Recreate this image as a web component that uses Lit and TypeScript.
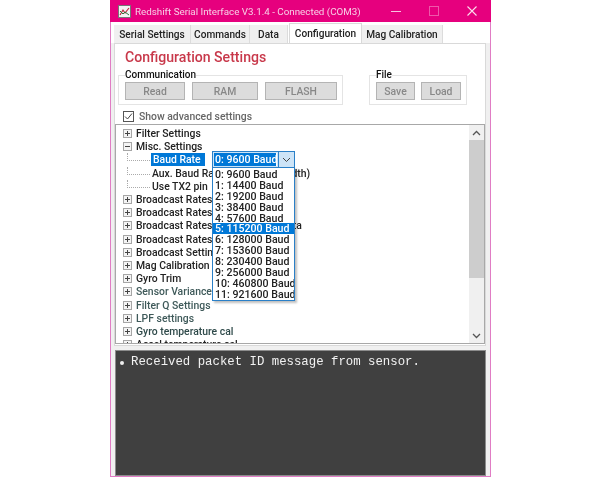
import { LitElement, html, css, svg } from "lit";
import { customElement } from "lit/decorators.js";

const options = ["0: 9600 Baud","1: 14400 Baud","2: 19200 Baud","3: 38400 Baud","4: 57600 Baud","5: 115200 Baud","6: 128000 Baud","7: 153600 Baud","8: 230400 Baud","9: 256000 Baud","10: 460800 Baud","11: 921600 Baud"];
const top1 = ["Filter Settings"];
const rest = [
  ["Broadcast Rates - Raw Data","#222"],["Broadcast Rates - Processed","#222"],["Broadcast Rates - Quaternions Data","#222"],["Broadcast Rates - Euler","#222"],
  ["Broadcast Settings","#222"],["Mag Calibration","#222"],["Gyro Trim","#222"],["Sensor Variances","#3f5a5a"],["Filter Q Settings","#3f5a5a"],["LPF settings","#3f5a5a"],["Gyro temperature cal","#2f4a4a"],["Accel temperature cal","#222"],
];

const expander = (minus = false) => svg`<svg class="exp" width="9" height="9" viewBox="0 0 9 9"><rect x=".5" y=".5" width="8" height="8" fill="#f4f4f4" stroke="#a6a6a6"/><path d="M2 4.5h5${minus ? "" : "M4.5 2v5"}" stroke="#444" fill="none"/></svg>`;

@customElement("app-root")
export class AppRoot extends LitElement {
  static styles = css`
    :host { display: block; width: 600px; height: 480px; background: #fff; overflow: hidden; font-family: Roboto, "Liberation Sans", sans-serif; font-size: 10.4px; color: #222; }
    .page { padding: 0 0 0 110px; height: 480px; box-sizing: border-box; filter: blur(0.35px); }
    .win { width: 381px; height: 477px; box-sizing: border-box; border: 1px solid #e07cc4; border-top: 0; background: #f0f0f0; display: flex; flex-direction: column; }
    .title { height: 22px; flex: none; margin: 0 -1px; background: #e6007e; color: #f7cfe6; display: flex; align-items: center; padding-left: 8px; font-size: 9.8px; }
    .app { width: 13px; height: 13px; flex: none; margin-right: 4px; }
    .title span { flex: 1; white-space: nowrap; }
    .ctl { width: 38px; display: flex; justify-content: center; align-items: center; flex: none; }
    .tabs { display: flex; height: 21px; padding: 2px 0 0 3px; box-sizing: border-box; background: #fff; align-items: flex-end; flex: none; }
    .tab { height: 18px; line-height: 19px; padding: 0 3px; background: #f0f0f0; border-right: 1px solid #dcdcdc; font-weight: 500; font-size: 10.1px; white-space: nowrap; box-sizing: border-box; text-align: center; }
    .tab.on { height: 20px; line-height: 19px; background: #fff; border: 1px solid #d9d9d9; border-bottom: 0; margin-left: 1px; }
    .panel { background: #fff; border: 1px solid #d9d9d9; margin: 0 4px 0 3px; height: 303px; flex: none; box-sizing: border-box; padding: 3px 0 0 0; display: flex; flex-direction: column; }
    h1 { margin: 0 0 0 10px; font-size: 14.1px; line-height: 20px; font-weight: 500; color: #c8384a; }
    .groups { display: flex; padding: 0 0 0 3px; gap: 26px; height: 38px; flex: none; }
    fieldset { margin: 3px 0 0; padding: 2px 5px 0 6px; border: 1px solid #e4e4e4; display: flex; gap: 7px; align-items: flex-start; height: 35px; box-sizing: border-box; }
    legend { padding: 0; font-weight: 500; font-size: 10px; line-height: 10px; color: #111; }
    .comm { width: 225px; }
    .file { width: 96px; gap: 6px; }
    .btn { height: 18px; line-height: 17px; box-sizing: border-box; background: #dcdcdc; border: 1px solid #b4b4b4; color: #888; text-align: center; font-weight: 500; }
    .check { display: flex; align-items: center; gap: 5px; margin: 4px 0 0 8px; height: 14px; color: #666; font-weight: 500; flex: none; }
    .box { width: 11px; height: 11px; flex: none; }
    .treewrap { margin: 1px 0 0 0; height: 220px; border: 1px solid #a8a8a8; background: #fff; box-sizing: border-box; display: flex; position: relative; overflow: hidden; flex: none; }
    .tree { flex: 1; padding: 2px 0 0 7px; overflow: hidden; font-weight: 500; }
    .row { height: 13.2px; line-height: 13px; display: flex; align-items: center; white-space: nowrap; }
    .exp { flex: none; margin-right: 4px; }
    .kid { display: flex; align-items: center; height: 13.2px; padding-left: 4px; white-space: nowrap; }
    .line { width: 22px; height: 7px; align-self: flex-start; margin-right: 2px; flex: none; border-left: 1px dotted #aaa; border-bottom: 1px dotted #aaa; }
    .sel { background: #0078d7; color: #fff; padding: 0 3px 0 2px; margin-left: -1px; line-height: 13px; width: 49px; }
    .scroll { width: 15px; flex: none; background: #f0f0f0; display: flex; flex-direction: column; }
    .sb { height: 15px; display: flex; align-items: center; justify-content: center; flex: none; }
    .thumb { height: 138px; background: #cdcdcd; flex: none; }
    .grow { flex: 1; }
    .combo { position: absolute; left: 96px; top: 26px; width: 83px; height: 17px; box-sizing: border-box; border: 1px solid #2a80c8; background: #cde4f7; display: flex; font-size: 10.6px; }
    .val { flex: 1; margin: 1px; background: #fff; overflow: hidden; white-space: nowrap; color: #fff; }
    .val b { display: block; background: #0078d7; font-weight: 500; padding-left: 1px; line-height: 13px; margin-right: 1px; }
    .arrow { width: 15px; border-left: 1px solid #2a80c8; display: flex; align-items: center; justify-content: center; }
    .list { position: absolute; left: 96px; top: 42px; width: 83px; height: 134px; box-sizing: border-box; border: 1px solid #2a80c8; background: #fff; box-shadow: 2px 2px 2px rgba(0,0,0,.25); font-weight: 500; font-size: 10.6px; padding-top: 1px; z-index: 2; }
    .opt { height: 10.9px; line-height: 11px; padding-left: 2px; white-space: nowrap; overflow: hidden; }
    .opt.on { background: #0078d7; color: #fff; }
    .log { margin: 4px 4px 0 4px; height: 126px; flex: none; box-sizing: border-box; background: #404040; border: 1px solid #8c8c8c; color: #f2f2f2; font-family: "Liberation Mono", monospace; font-size: 12.35px; padding: 4px 0 0 3px; display: flex; gap: 2px; white-space: nowrap; }
    .dot { width: 4px; height: 4px; border-radius: 50%; background: #eee; margin: 6px 5px 0 1px; flex: none; }
  `;

  render() {
    return html`<div class="page"><div class="win">
      <div class="title">
        <svg class="app" viewBox="0 0 13 13"><rect x=".5" y=".5" width="12" height="12" fill="#f4f4f4" stroke="#777"/><path d="M2 10l3-5 2 3 4-5" stroke="#c0243c" fill="none" stroke-width="1.2"/><path d="M2 6l3 3 2-2 4 3" stroke="#2a7a3c" fill="none"/></svg>
        <span>Redshift Serial Interface V3.1.4 - Connected (COM3)</span>
        <div class="ctl"><svg width="10" height="10" viewBox="0 0 10 10"><path d="M0 5.5h10" stroke="#f7c4e0"/></svg></div>
        <div class="ctl"><svg width="10" height="10" viewBox="0 0 10 10"><rect x=".5" y=".5" width="9" height="9" fill="none" stroke="#ee58aa"/></svg></div>
        <div class="ctl"><svg width="10" height="10" viewBox="0 0 10 10"><path d="M.5 .5l9 9M9.5 .5l-9 9" stroke="#fbdcec" stroke-width="1.1"/></svg></div>
      </div>
      <div class="tabs">
        <div class="tab" style="width:77px">Serial Settings</div><div class="tab" style="width:59px">Commands</div><div class="tab" style="width:38px">Data</div><div class="tab on" style="width:73px">Configuration</div><div class="tab" style="width:81px">Mag Calibration</div>
      </div>
      <div class="panel">
        <h1>Configuration Settings</h1>
        <div class="groups">
          <fieldset class="comm"><legend>Communication</legend>
            <div class="btn" style="width:60px">Read</div><div class="btn" style="width:66px">RAM</div><div class="btn" style="width:72px">FLASH</div>
          </fieldset>
          <fieldset class="file"><legend>File</legend>
            <div class="btn" style="width:39px">Save</div><div class="btn" style="width:40px">Load</div>
          </fieldset>
        </div>
        <div class="check">
          <svg class="box" viewBox="0 0 11 11"><rect x=".5" y=".5" width="10" height="10" fill="#fff" stroke="#555"/><path d="M2 5.5l2.5 2.5L9 2.5" stroke="#444" fill="none"/></svg>
          Show advanced settings
        </div>
        <div class="treewrap">
          <div class="tree">
            ${top1.map((t) => html`<div class="row">${expander()}${t}</div>`)}
            <div class="row">${expander(true)}Misc. Settings</div>
            <div class="kid"><div class="line"></div><div class="sel">Baud Rate</div></div>
            <div class="kid"><div class="line"></div>Aux. Baud Rate (Serial bandwidth)</div>
            <div class="kid"><div class="line"></div>Use TX2 pin</div>
            ${rest.map(([t, c]) => html`<div class="row" style="color:${c}">${expander()}${t}</div>`)}
          </div>
          <div class="scroll">
            <div class="sb"><svg width="9" height="6" viewBox="0 0 9 6"><path d="M1 5l3.5-3.5L8 5" stroke="#555" stroke-width="1.3" fill="none"/></svg></div>
            <div class="thumb"></div><div class="grow"></div>
            <div class="sb"><svg width="9" height="6" viewBox="0 0 9 6"><path d="M1 1l3.5 3.5L8 1" stroke="#555" stroke-width="1.3" fill="none"/></svg></div>
          </div>
          <div class="combo">
            <div class="val"><b>0: 9600 Baud</b></div>
            <div class="arrow"><svg width="9" height="6" viewBox="0 0 9 6"><path d="M1 1l3.5 3.5L8 1" stroke="#444" fill="none"/></svg></div>
          </div>
          <div class="list">
            ${options.map((o, i) => html`<div class="opt ${i === 5 ? "on" : ""}">${o}</div>`)}
          </div>
        </div>
      </div>
      <div class="log"><div class="dot"></div>Received packet ID message from sensor.</div>
    </div></div>`;
  }
}
